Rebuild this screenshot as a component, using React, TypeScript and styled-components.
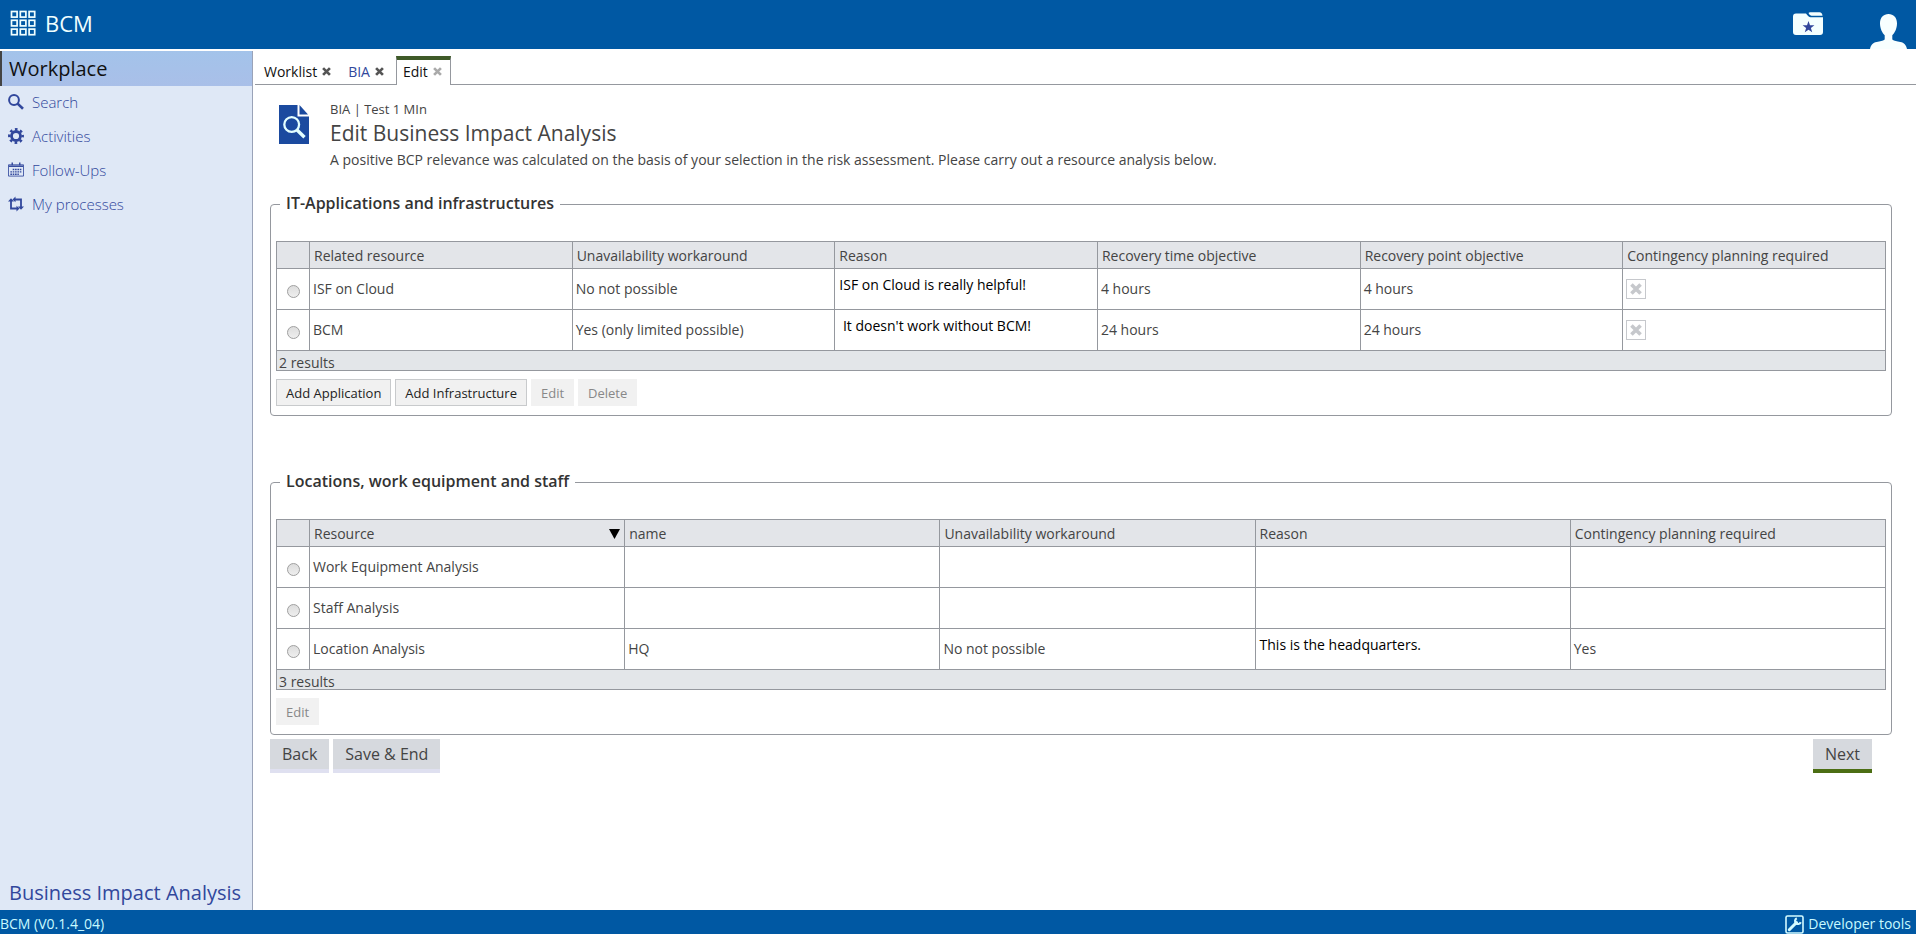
import React, { useState } from 'react';
import styled, { createGlobalStyle, css } from 'styled-components';

const BLUE = '#0058a3';
const LINK = '#31479c';
const LINE = '#95989e';

const GlobalStyle = createGlobalStyle`
  *, *::before, *::after { box-sizing: border-box; }
  body {
    margin: 0;
    background: #fff;
    color: #444;
    font-family: 'Open Sans', 'Noto Sans', sans-serif;
    font-size: 14px;
    font-weight: 400;
    line-height: 20px;
  }
  button { font: inherit; color: inherit; border: 0; background: none; padding: 0; cursor: pointer; }
  a { color: inherit; text-decoration: none; }
`;

const Page = styled.div`
  display: flex;
  flex-direction: column;
  min-height: 100vh;
`;

const TopBar = styled.header`
  display: flex;
  align-items: flex-end;
  justify-content: space-between;
  height: 49px;
  padding: 0 9px 0 10px;
  background: ${BLUE};
  color: #f0ffff;
`;

const Brand = styled.a`
  display: flex;
  align-items: center;
  gap: 9px;
  height: 49px;
  padding-bottom: 3px;
  font-size: 22px;
  line-height: 28px;
`;

const TopActions = styled.div`
  display: flex;
  align-items: flex-end;
  gap: 46px;
`;

const IconButton = styled.button<{ $lift?: boolean }>`
  display: flex;
  padding-bottom: ${p => (p.$lift ? 13 : 0)}px;
`;

const Body = styled.div`
  display: flex;
  flex: 1;
  padding-top: 2px;
`;

const Sidebar = styled.nav`
  display: flex;
  flex-direction: column;
  flex: 0 0 253px;
  border-right: 1px solid #9aa3b8;
  background: #dfe8f6;
  color: ${LINK};
`;

const SidebarTitle = styled.h2`
  margin: 0;
  padding: 1px 7px 0;
  height: 35px;
  border-left: 2px solid #444;
  background: linear-gradient(#a3c3ea, #a9bfe8);
  color: #111;
  font-size: 20px;
  font-weight: 400;
  line-height: 34px;
`;

const NavList = styled.ul`
  flex: 1;
  margin: 0;
  padding: 0;
  list-style: none;
`;

const NavLink = styled.a`
  display: flex;
  align-items: center;
  gap: 8px;
  height: 34px;
  padding: 0 8px 3px;
  font-size: 15px;
  font-weight: 300;
`;

const SidebarFooter = styled.a`
  padding: 0 9px 3px;
  font-size: 20px;
  line-height: 28px;
`;

const Main = styled.main`
  flex: 1;
  min-width: 0;
`;

const TabStrip = styled.div`
  display: flex;
  height: 34px;
  margin: 0 0 0 2px;
  border-bottom: 1px solid ${LINE};
`;

const TabItem = styled.div<{ $active?: boolean; $link?: boolean }>`
  display: flex;
  align-items: center;
  gap: 5px;
  height: 29px;
  margin-top: 5px;
  padding: 2px 8px 0 9px;
  color: ${p => (p.$link ? LINK : '#111')};
  ${p =>
    p.$active &&
    css`
      margin-left: 4px;
      padding: 0 8px 2px 6px;
      border: 1px solid ${LINE};
      border-top: 4px solid #3f5a28;
      border-bottom: 0;
      background: #fff;
    `}
`;

const CloseButton = styled.button<{ $muted?: boolean }>`
  display: flex;
  color: ${p => (p.$muted ? '#aaa' : '#555')};
`;

const Intro = styled.section`
  display: flex;
  gap: 21px;
  padding: 14px 24px 0 26px;
`;

const DocBox = styled.div`
  padding-top: 6px;
`;

const Crumb = styled.p`
  margin: 0;
  font-size: 13px;
  line-height: 20px;
`;

const Title = styled.h1`
  margin: 0;
  font-size: 21px;
  font-weight: 400;
  line-height: 28px;
`;

const Lead = styled.p`
  margin: 0;
  line-height: 26px;
`;

const Content = styled.form`
  padding: 20px 24px 24px 17px;
`;

const Group = styled.fieldset`
  min-width: 0;
  margin: 0 0 55px;
  padding: 26px 5px 9px;
  border: 1px solid ${LINE};
  border-radius: 4px;

  &:last-of-type { margin-bottom: 4px; }
`;

const Legend = styled.legend`
  margin-left: 4px;
  padding: 0 6px 2px;
  color: #333;
  font-size: 16px;
  font-weight: 600;
  line-height: 20px;
`;

const Table = styled.table`
  width: 100%;
  table-layout: fixed;
  border-collapse: collapse;
`;

const HeadCell = styled.th<{ $pick?: boolean }>`
  width: ${p => (p.$pick ? '33px' : 'auto')};
  height: 27px;
  padding: 1px 4px 0;
  border: 1px solid ${LINE};
  background: #e3e5e9;
  font-weight: 400;
  text-align: left;
`;

const HeadInner = styled.span`
  display: flex;
  align-items: center;
  justify-content: space-between;
`;

const Cell = styled.td<{ $remark?: boolean }>`
  height: 41px;
  padding: 0 3px;
  border: 1px solid ${LINE};
  ${p =>
    p.$remark &&
    css`
      padding: 6px 4px 0;
      color: #000;
      vertical-align: top;
      white-space: pre-wrap;
    `}
`;

const FootCell = styled.td`
  height: 20px;
  padding: 4px 2px 0;
  border: 1px solid ${LINE};
  background: #e3e6e9;
  line-height: 15px;
`;

const Radio = styled.input.attrs({ type: 'radio' })`
  display: block;
  appearance: none;
  width: 13px;
  height: 13px;
  margin: 4px auto 0;
  border: 1px solid #a0a0a0;
  border-radius: 50%;
  background: linear-gradient(#ddd, #eee);
  &:checked { background: radial-gradient(#444 0 3px, #e6e6e6 4px); }
`;

const TickBox = styled.label`
  display: grid;
  place-items: center;
  width: 20px;
  color: #c6c8cc;
  & > * { grid-area: 1 / 1; }
`;

const TickInput = styled.input.attrs({ type: 'checkbox' })`
  appearance: none;
  width: 20px;
  height: 20px;
  margin: 0;
  border: 1px solid #c6c8cc;
  background: #fff;
`;

const ButtonRow = styled.div`
  display: flex;
  gap: 4px;
  padding-top: 8px;
`;

const SmallButton = styled.button`
  height: 27px;
  padding: 0 9px;
  border: 1px solid #c8cacc;
  background: #f1f1f1;
  color: #222;
  font-size: 13px;
  &:disabled { border-color: #f1f1f1; color: #888; cursor: default; }
`;

const WizardBar = styled.div`
  display: flex;
  gap: 4px;
  padding-right: 20px;
`;

const WizardButton = styled.button<{ $primary?: boolean }>`
  height: 34px;
  padding: 0 12px;
  border-bottom: 4px solid ${p => (p.$primary ? '#4c6e14' : '#dfe0f0')};
  background: #d6d9de;
  font-size: 16px;
  margin-left: ${p => (p.$primary ? 'auto' : 0)};
`;

const StatusBar = styled.footer`
  display: flex;
  align-items: center;
  justify-content: space-between;
  height: 24px;
  padding: 4px 5px 0 0;
  background: ${BLUE};
  color: #c8faff;
`;

const DevLink = styled.a`
  display: flex;
  align-items: center;
  gap: 4px;
`;

const Cross = ({ size = 9 }: { size?: number }) => (
  <svg width={size} height={size} viewBox="0 0 10 10" aria-hidden="true">
    <path d="M1.200 1.200 8.800 8.800M8.800 1.200 1.200 8.800" stroke="currentColor" strokeWidth="3" />
  </svg>
);

const GridIcon = () => (
  <svg width="26" height="26" viewBox="0 0 26 26" fill="none" stroke="currentColor" strokeWidth="1.700" aria-hidden="true">
    {[0, 1, 2].map(r =>
      [0, 1, 2].map(c => <rect key={`${r}${c}`} x={1.5 + c * 8.8} y={1.5 + r * 8.8} width="5.600" height="5.600" />)
    )}
  </svg>
);

const FolderStarIcon = () => (
  <svg width="32" height="24" viewBox="0 0 32 24" aria-hidden="true">
    <path
      fill="#f4ffff"
      d="M4 1.5h10q2.500 3.700 4.500 3.700H31V20q0 3-3 3H4q-3 0-3-3V4.500q0-3 3-3zM16.500 1q.6-.8 1.500-.8h9.500q2.700 0 3 3.500H19.500q-2-.2-3-2.700z"
    />
    <path fill="#31479c" d="m16.500 9 1.500 4.300h4.400l-3.500 2.700 1.300 4.300-3.700-2.600-3.700 2.600 1.300-4.300-3.500-2.700H15z" />
  </svg>
);

const UserIcon = () => (
  <svg width="37" height="35" viewBox="0 0 37 35" fill="#f8ffff" aria-hidden="true">
    <path d="M18.500 0c5 0 8.500 3.600 8.500 9.200 0 5.500-2.300 9.600-4.700 12v4.300c2 1.600 4.500 1.800 8 2.500 4 .8 5.700 3 6.700 7H0c1-4 2.700-6.200 6.700-7 3.500-.7 6-.9 8-2.500v-4.300C12.300 18.800 10 14.700 10 9.200 10 3.600 13.500 0 18.500 0z" />
  </svg>
);

const SearchIcon = () => (
  <svg width="16" height="16" viewBox="0 0 16 16" fill="none" stroke="currentColor" aria-hidden="true">
    <circle cx="6" cy="6" r="4.900" strokeWidth="2" />
    <path d="m9.600 9.600 5.400 5.200" strokeWidth="2.600" />
  </svg>
);

const GearIcon = () => (
  <svg width="16" height="16" viewBox="0 0 16 16" fill="none" stroke="currentColor" aria-hidden="true">
    <circle cx="8" cy="8" r="4.500" strokeWidth="2.800" />
    <circle cx="8" cy="8" r="6.700" strokeWidth="2.500" strokeDasharray="2.630 2.630" strokeDashoffset="1.300" />
  </svg>
);

const CalendarIcon = () => (
  <svg width="16" height="15" viewBox="0 0 17 15" fill="none" stroke="currentColor" aria-hidden="true">
    <path d="M.5 2.500h16v12H.5z" strokeWidth=".9" />
    <path d="M1 4h15" strokeWidth="1.600" />
    <path d="M4.500 0v3M12.500 0v3" strokeWidth="1.500" />
    <path d="M5 7.500h10M2.500 10h12.500M2.500 12.500h9" strokeWidth="1.500" strokeDasharray="1.700 .8" />
  </svg>
);

const ProcessIcon = () => (
  <svg width="16" height="16" viewBox="0 0 16 16" aria-hidden="true">
    <g fill="none" stroke="currentColor" strokeWidth="1.800">
      <path d="M3 4v8.500h7M6.500 3.500H13V11" />
    </g>
    <path
      fill="currentColor"
      d="M0 5.500 3 2.300l3 3.200zM16 10.500l-3 3.200-3-3.200zM8.500 9.700l3 2.800-3 3zM7.500.5 4.500 3.500l3 2.800z"
    />
  </svg>
);

const DocSearchIcon = () => (
  <svg width="30" height="39" viewBox="0 0 30 39" aria-hidden="true">
    <path fill="#1b4a9f" d="M0 0h18.500v11.500H30V39H0z" />
    <path fill="#1b4a9f" d="M20.500 0 29 9.500h-8.500z" />
    <g fill="none" stroke="#e4ffff" strokeWidth="2.300">
      <circle cx="12.700" cy="19.500" r="7.400" />
      <path d="m17.800 24.700 7.700 7.500" strokeWidth="3.400" />
    </g>
  </svg>
);

const WrenchIcon = () => (
  <svg width="19" height="19" viewBox="0 0 19 19" fill="none" stroke="#d4fbff" aria-hidden="true">
    <rect x="1" y="1" width="17" height="17" rx="1.500" strokeWidth="1.600" />
    <path d="M4.300 14.700 11.500 7.500" strokeWidth="3" strokeLinecap="round" />
    <path d="M11.800 3.300a3 3 0 1 0 4 4" strokeWidth="2.200" />
  </svg>
);

const SortIcon = () => (
  <svg width="11" height="10" viewBox="0 0 11 10" aria-hidden="true">
    <path d="M0 0h11L5.500 10z" fill="#000" />
  </svg>
);

const navItems = [
  { label: 'Search', Icon: SearchIcon },
  { label: 'Activities', Icon: GearIcon },
  { label: 'Follow-Ups', Icon: CalendarIcon },
  { label: 'My processes', Icon: ProcessIcon },
];

type Column = { title: string; remark?: boolean; sorted?: boolean; tick?: boolean };

const itColumns: Column[] = [
  { title: 'Related resource' },
  { title: 'Unavailability workaround' },
  { title: 'Reason', remark: true },
  { title: 'Recovery time objective' },
  { title: 'Recovery point objective' },
  { title: 'Contingency planning required', tick: true },
];
const itRows = [
  ['ISF on Cloud', 'No not possible', 'ISF on Cloud is really helpful!', '4 hours', '4 hours', ''],
  ['BCM', 'Yes (only limited possible)', " It doesn't work without BCM!", '24 hours', '24 hours', ''],
];

const siteColumns: Column[] = [
  { title: 'Resource', sorted: true },
  { title: 'name' },
  { title: 'Unavailability workaround' },
  { title: 'Reason', remark: true },
  { title: 'Contingency planning required' },
];
const siteRows = [
  ['Work Equipment Analysis', '', '', '', ''],
  ['Staff Analysis', '', '', '', ''],
  ['Location Analysis', 'HQ', 'No not possible', 'This is the headquarters.', 'Yes'],
];

function ResourceTable({ name, columns, rows }: { name: string; columns: Column[]; rows: string[][] }) {
  const [picked, setPicked] = useState(-1);
  return (
    <Table>
      <thead>
        <tr>
          <HeadCell $pick />
          {columns.map(c => (
            <HeadCell key={c.title} scope="col">
              <HeadInner>
                {c.title}
                {c.sorted && <SortIcon />}
              </HeadInner>
            </HeadCell>
          ))}
        </tr>
      </thead>
      <tbody>
        {rows.map((row, r) => (
          <tr key={row[0]}>
            <Cell>
              <Radio name={name} aria-label={row[0]} checked={picked === r} onChange={() => setPicked(r)} />
            </Cell>
            {columns.map((c, i) => (
              <Cell key={c.title} $remark={c.remark}>
                {c.tick ? (
                  <TickBox>
                    <TickInput aria-label={c.title} checked disabled readOnly />
                    <Cross size={12} />
                  </TickBox>
                ) : (
                  row[i]
                )}
              </Cell>
            ))}
          </tr>
        ))}
      </tbody>
      <tfoot>
        <tr>
          <FootCell colSpan={columns.length + 1}>{rows.length} results</FootCell>
        </tr>
      </tfoot>
    </Table>
  );
}

export default function App() {
  return (
    <Page>
      <GlobalStyle />
      <TopBar>
        <Brand href="#home">
          <GridIcon />
          BCM
        </Brand>
        <TopActions>
          <IconButton $lift aria-label="Favourites">
            <FolderStarIcon />
          </IconButton>
          <IconButton aria-label="User">
            <UserIcon />
          </IconButton>
        </TopActions>
      </TopBar>
      <Body>
        <Sidebar>
          <SidebarTitle>Workplace</SidebarTitle>
          <NavList>
            {navItems.map(({ label, Icon }) => (
              <li key={label}>
                <NavLink href={`#${label}`}>
                  <Icon />
                  {label}
                </NavLink>
              </li>
            ))}
          </NavList>
          <SidebarFooter href="#bia">Business Impact Analysis</SidebarFooter>
        </Sidebar>
        <Main>
          <TabStrip>
            <TabItem>
              <a href="#worklist">Worklist</a>
              <CloseButton aria-label="Close Worklist"><Cross /></CloseButton>
            </TabItem>
            <TabItem $link>
              <a href="#bia-tab">BIA</a>
              <CloseButton aria-label="Close BIA"><Cross /></CloseButton>
            </TabItem>
            <TabItem $active>
              <a href="#edit">Edit</a>
              <CloseButton $muted aria-label="Close Edit"><Cross /></CloseButton>
            </TabItem>
          </TabStrip>
          <Intro>
            <DocBox><DocSearchIcon /></DocBox>
            <div>
              <Crumb>BIA | Test 1 MIn</Crumb>
              <Title>Edit Business Impact Analysis</Title>
              <Lead>
                A positive BCP relevance was calculated on the basis of your selection in the risk assessment. Please
                carry out a resource analysis below.
              </Lead>
            </div>
          </Intro>
          <Content onSubmit={e => e.preventDefault()}>
            <Group>
              <Legend>IT-Applications and infrastructures</Legend>
              <ResourceTable name="it" columns={itColumns} rows={itRows} />
              <ButtonRow>
                <SmallButton type="button">Add Application</SmallButton>
                <SmallButton type="button">Add Infrastructure</SmallButton>
                <SmallButton type="button" disabled>Edit</SmallButton>
                <SmallButton type="button" disabled>Delete</SmallButton>
              </ButtonRow>
            </Group>
            <Group>
              <Legend>Locations, work equipment and staff</Legend>
              <ResourceTable name="site" columns={siteColumns} rows={siteRows} />
              <ButtonRow>
                <SmallButton type="button" disabled>Edit</SmallButton>
              </ButtonRow>
            </Group>
            <WizardBar>
              <WizardButton type="button">Back</WizardButton>
              <WizardButton type="button">Save &amp; End</WizardButton>
              <WizardButton $primary>Next</WizardButton>
            </WizardBar>
          </Content>
        </Main>
      </Body>
      <StatusBar>
        <span>BCM (V0.1.4_04)</span>
        <DevLink href="#developer-tools">
          <WrenchIcon />
          Developer tools
        </DevLink>
      </StatusBar>
    </Page>
  );
}
